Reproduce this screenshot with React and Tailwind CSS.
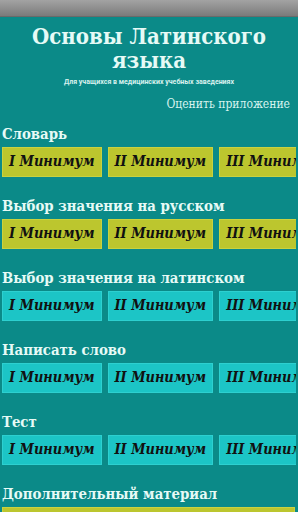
const serif = { fontFamily: '"DejaVu Serif Condensed", "DejaVu Serif", serif' };

const sections = [
  { title: 'Словарь', tone: 'lime' },
  { title: 'Выбор значения на русском', tone: 'lime' },
  { title: 'Выбор значения на латинском', tone: 'cyan' },
  { title: 'Написать слово', tone: 'cyan' },
  { title: 'Тест', tone: 'cyan' },
];

const levels = ['I Минимум', 'II Минимум', 'III Минимум'];

function LevelButton({ label, tone }) {
  const colors =
    tone === 'lime'
      ? 'bg-[#bcc62e] border-[#c9d23f]'
      : 'bg-[#1cc5c6] border-[#2dd0d0]';
  return (
    <button
      className={`shrink-0 h-[30px] px-[6px] border ${colors} text-[14.4px] font-bold italic text-[#111] leading-none`}
    >
      {label}
    </button>
  );
}

export default function App() {
  return (
    <div className="w-[298px] h-[512px] overflow-hidden bg-[#0b8a88]" style={serif}>
      {/* status bar */}
      <div className="h-[17px] bg-gradient-to-b from-[#a3a3a3] to-[#7b7b7b] border-b border-[#6a6a6a]" />

      <h1 className="mt-[7px] text-center text-[22px] leading-[24px] font-bold text-[#e6faf6]">
        Основы Латинского
        <br />
        языка
      </h1>
      <p
        className="mt-[5px] text-center text-[7px] font-bold text-[#d8f1ee]"
        style={{ fontFamily: 'Roboto, "Liberation Sans", sans-serif' }}
      >
        Для учащихся в медицинских учебных заведениях
      </p>
      <div className="mt-[7px] pr-[8px] text-right text-[12px] text-[#d6f3ef]">Оценить приложение</div>

      <div className="mt-[13px] flex flex-col gap-[21px]">
        {sections.map((s) => (
          <section key={s.title} className="px-[2px]">
            <h2 className="text-[14.8px] leading-[16px] font-bold text-[#e6faf6] whitespace-nowrap">{s.title}</h2>
            <div className="mt-[5px] flex gap-[6px] overflow-hidden whitespace-nowrap">
              {levels.map((l) => (
                <LevelButton key={l} label={l} tone={s.tone} />
              ))}
            </div>
          </section>
        ))}
        <section className="px-[2px]">
          <h2 className="text-[14.8px] leading-[16px] font-bold text-[#e6faf6]">Дополнительный материал</h2>
          <div className="mt-[5px] h-[30px] mr-[1px] bg-[#bcc62e] border border-[#c9d23f]" />
        </section>
      </div>
    </div>
  );
}
